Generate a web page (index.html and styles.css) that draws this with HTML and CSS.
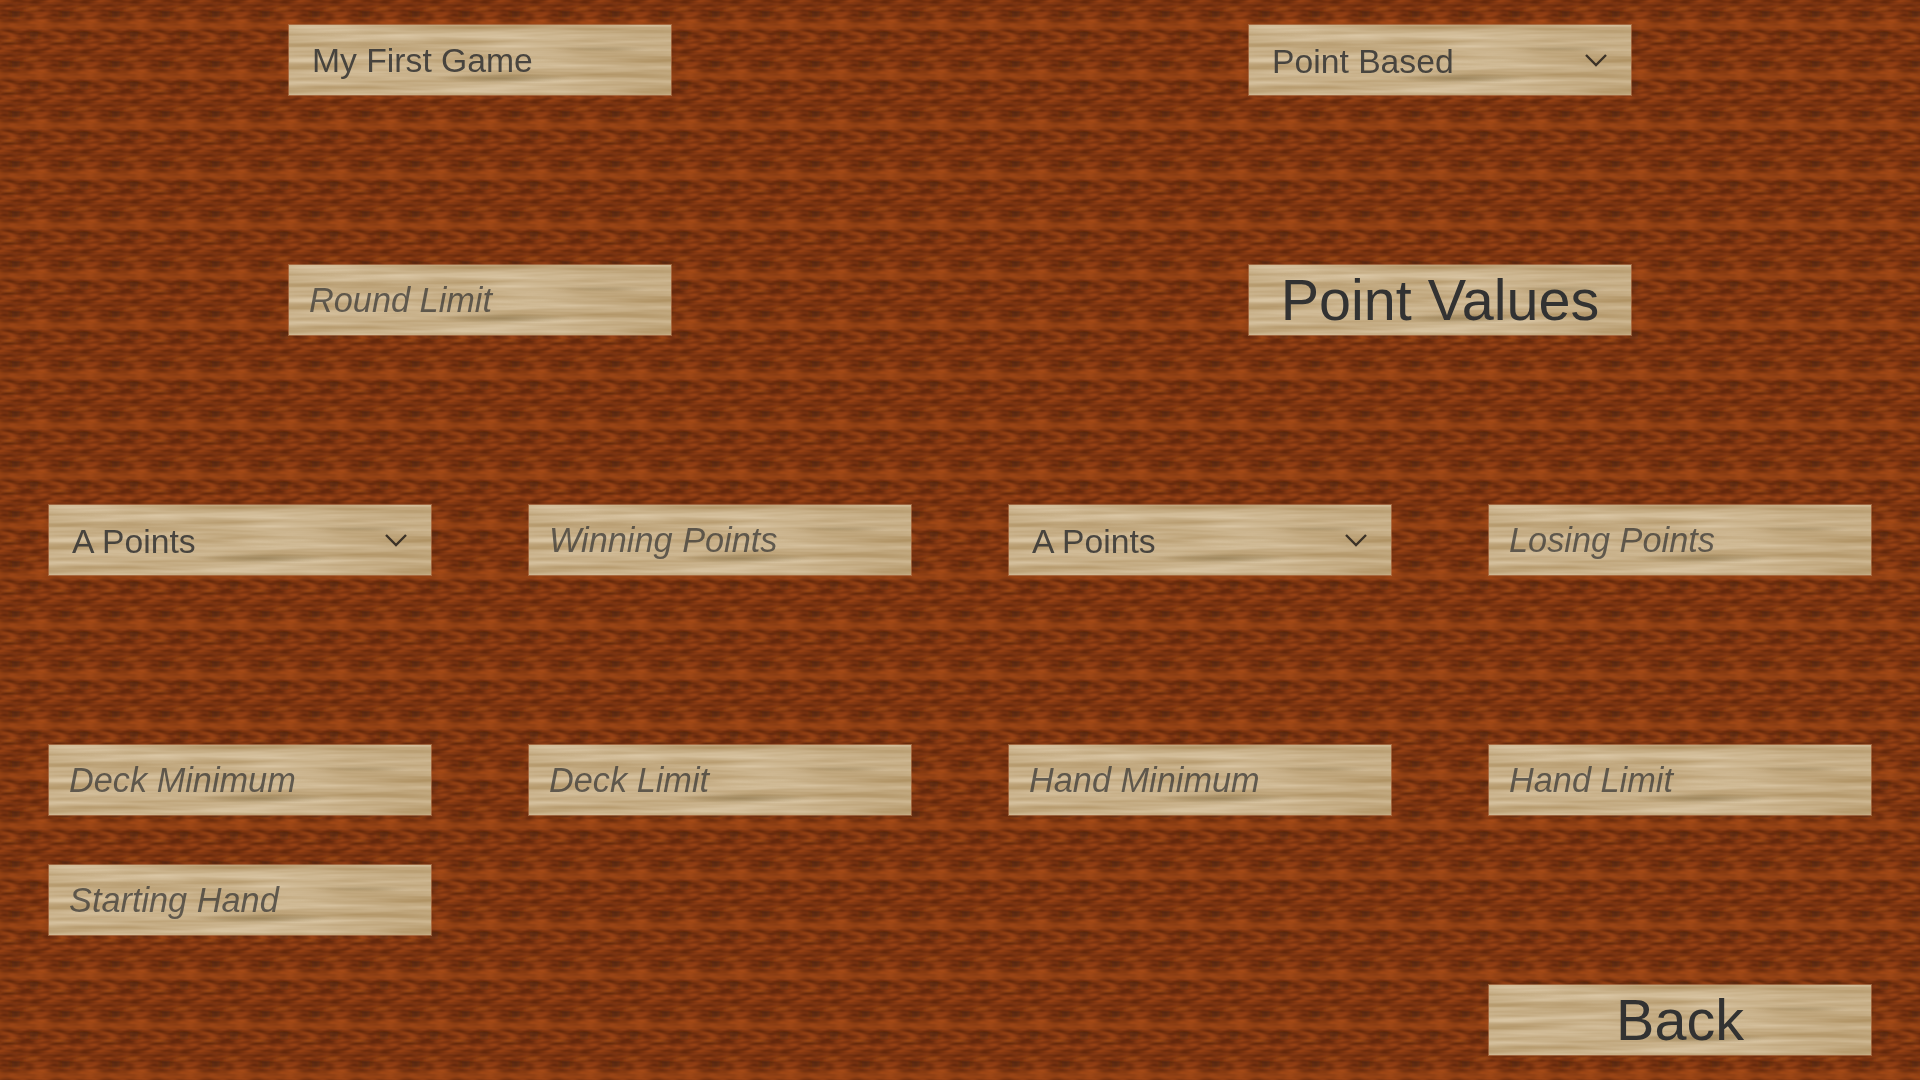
FILE: index.html
```html
<!DOCTYPE html>
<html lang="en">
<head>
  <meta charset="UTF-8" />
  <title>Game Setup</title>
  <link rel="stylesheet" href="styles.css">
</head>
<body>

  <!-- Wood textures, shared by the page background and the planks -->
  <svg class="wood-bg" aria-hidden="true">
    <defs>
      <filter id="grain" x="0" y="0" width="100%" height="100%" color-interpolation-filters="sRGB">
        <feTurbulence type="fractalNoise" baseFrequency="0.06 0.2" numOctaves="2" seed="4" stitchTiles="stitch" />
        <feColorMatrix values="0.42 0 0 0 0.28  0.21 0 0 0 0.1  0.07 0 0 0 0.03  0 0 0 0 1" />
      </filter>
      <filter id="soft" x="-50%" y="-200%" width="200%" height="500%">
        <feGaussianBlur stdDeviation="3 1.4" />
      </filter>
      <filter id="band" x="0" y="-300%" width="100%" height="700%">
        <feGaussianBlur stdDeviation="4 2.6" />
      </filter>
      <filter id="plank" x="0" y="0" width="100%" height="100%" color-interpolation-filters="sRGB">
        <feTurbulence type="fractalNoise" baseFrequency="0.007 0.13" numOctaves="3" seed="11" />
        <feColorMatrix values="0.22 0 0 0 0.67  0.27 0 0 0 0.55  0.34 0 0 0 0.36  0 0 0 0 1" />
      </filter>
      <pattern id="bg-tile" width="50" height="50" patternUnits="userSpaceOnUse">
        <rect width="50" height="50" filter="url(#grain)" />
        <rect x="-10" y="21" width="70" height="8" fill="#a84e16" opacity="0.55" filter="url(#band)" />
        <rect x="-10" y="2" width="70" height="4" fill="#5e2709" opacity="0.25" filter="url(#band)" />
        <rect x="12" y="11" width="8" height="7" fill="#452007" opacity="0.7" filter="url(#soft)" />
        <rect x="30" y="32" width="8" height="7" fill="#452007" opacity="0.7" filter="url(#soft)" />
        <rect x="26" y="8" width="12" height="2" fill="#bd601d" opacity="0.8" filter="url(#soft)" />
        <rect x="4" y="40" width="12" height="2" fill="#bd601d" opacity="0.8" filter="url(#soft)" />
      </pattern>
    </defs>
    <rect width="100%" height="100%" fill="url(#bg-tile)" />
  </svg>

  <main class="board">
    <div class="plank text wide row-1">
      <span>My First Game</span>
    </div>
    <div class="plank text select wide row-1">
      <span>Point Based</span>
      <svg class="chevron" viewBox="0 0 22 12"><path d="M1 1 L11 11 L21 1" /></svg>
    </div>

    <div class="plank hint wide row-3">
      <span>Round Limit</span>
    </div>
    <div class="plank title wide row-3">
      <span>Point Values</span>
    </div>

    <div class="plank text select row-5">
      <span>A Points</span>
      <svg class="chevron" viewBox="0 0 22 12"><path d="M1 1 L11 11 L21 1" /></svg>
    </div>
    <div class="plank hint row-5">
      <span>Winning Points</span>
    </div>
    <div class="plank text select row-5">
      <span>A Points</span>
      <svg class="chevron" viewBox="0 0 22 12"><path d="M1 1 L11 11 L21 1" /></svg>
    </div>
    <div class="plank hint row-5">
      <span>Losing Points</span>
    </div>

    <div class="plank hint row-7"><span>Deck Minimum</span></div>
    <div class="plank hint row-7"><span>Deck Limit</span></div>
    <div class="plank hint row-7"><span>Hand Minimum</span></div>
    <div class="plank hint row-7"><span>Hand Limit</span></div>

    <div class="plank hint row-8"><span>Starting Hand</span></div>

    <button class="plank title back row-9" type="button"><span>Back</span></button>
  </main>

</body>
</html>
```

FILE: styles.css
```css
/* Reset and base */
* {
  box-sizing: border-box;
}
body {
  margin: 0;
  width: 1920px;
  height: 1080px;
  overflow: hidden;
  position: relative;
  font-family: "Liberation Sans", Arial, sans-serif;
  background-color: #7a3510;
}

/* Tiled wood behind everything */
.wood-bg {
  position: absolute;
  inset: 0;
  width: 100%;
  height: 100%;
}

/* Board: 4 columns of 480px, 9 rows of 120px, each plank centred in its cell */
.board {
  position: relative;
  display: grid;
  grid-template-columns: repeat(4, 480px);
  grid-template-rows: repeat(9, 120px);
  place-items: center;
}
.row-1 { grid-row: 1; }
.row-3 { grid-row: 3; }
.row-5 { grid-row: 5; }
.row-7 { grid-row: 7; }
.row-8 { grid-row: 8; grid-column: 1; }
.row-9 { grid-row: 9; grid-column: 4; }
.wide { grid-column: span 2; }

/* Plank */
.plank {
  position: relative;
  width: 384px;
  height: 72px;
  display: flex;
  align-items: center;
  padding: 0;
  border: 1px solid rgba(182, 128, 88, 0.65);
  color: #323232;
  font-family: inherit;
  font-size: 33.7px;
  background: none;
}
.plank::before {
  content: "";
  position: absolute;
  inset: 0;
  background: #000;
  filter: url(#plank);
}
.plank::after {
  content: "";
  position: absolute;
  inset: 0;
  background:
    radial-gradient(ellipse 70px 5px at 56% 76%, rgba(120, 100, 60, 0.45), transparent),
    radial-gradient(ellipse 50px 3px at 82% 34%, rgba(120, 100, 60, 0.3), transparent);
}
.plank span,
.plank .chevron {
  position: relative;
  z-index: 1;
}

.text span {
  padding-left: 23px;
  opacity: 0.85;
}
.select span {
  padding-top: 2px;
}
.hint span {
  padding-left: 20px;
  font-size: 34.3px;
  font-style: italic;
  opacity: 0.7;
}
.title {
  justify-content: center;
  font-size: 57.5px;
}
.select {
  justify-content: space-between;
}
.chevron {
  width: 22px;
  height: 12px;
  margin-right: 24px;
  overflow: visible;
}
.chevron path {
  fill: none;
  stroke: #3b3228;
  stroke-width: 2.4;
}
```
